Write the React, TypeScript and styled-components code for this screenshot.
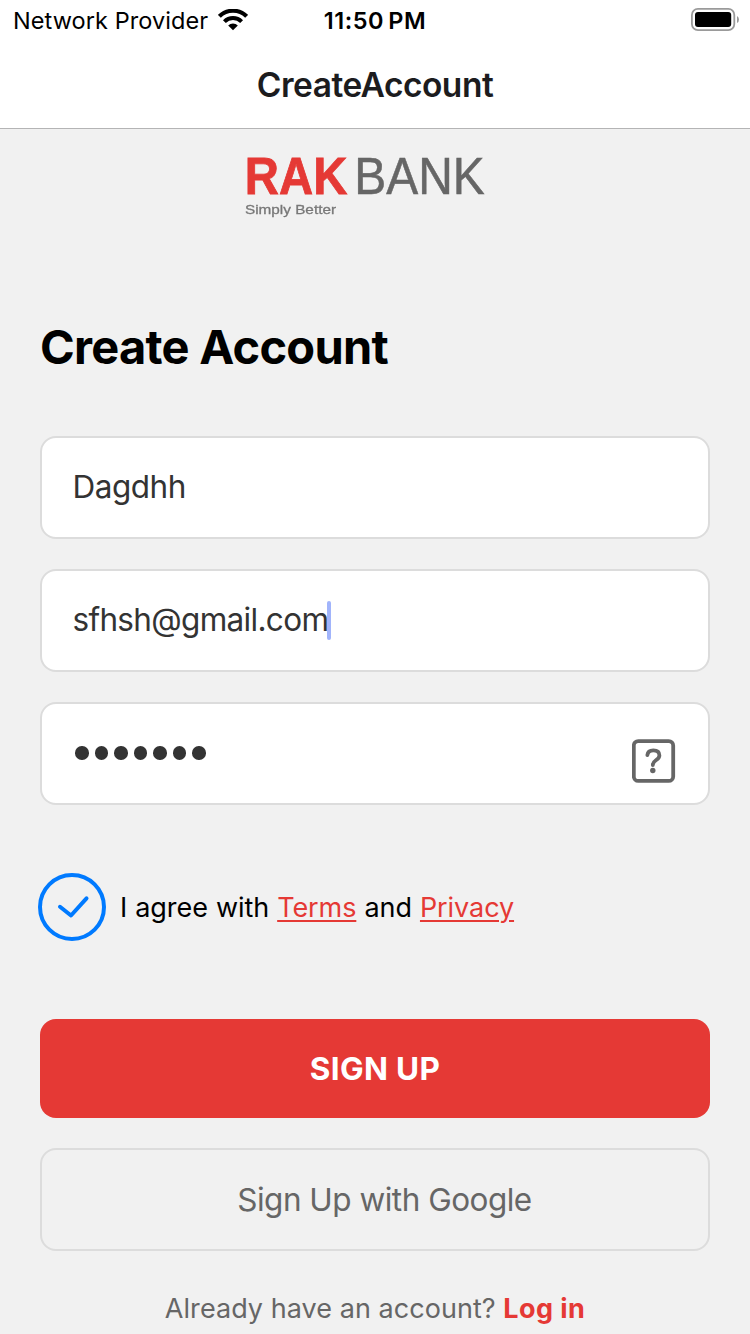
import React from "react";
import styled, { createGlobalStyle } from "styled-components";

const GlobalStyle = createGlobalStyle`
  * { box-sizing: border-box; }
  html, body { margin: 0; padding: 0; background: #f1f1f1; }
  body { font-family: Inter, "Liberation Sans", sans-serif; overflow: hidden; }
`;

const Screen = styled.div`
  width: 750px;
  height: 1334px;
  overflow: hidden;
  display: flex;
  flex-direction: column;
  background: #f1f1f1;
`;

const Header = styled.header`
  height: 129px;
  flex: none;
  background: #fff;
  border-bottom: 1px solid #b4b4b5;
`;

const StatusBar = styled.div`
  height: 40px;
  display: grid;
  grid-template-columns: 1fr auto 1fr;
  align-items: center;
  padding: 0 11px 0 13px;
  color: #000;
  line-height: 38px;
`;

const Carrier = styled.div`
  display: flex;
  align-items: center;
  gap: 9.5px;
  font-size: 23.5px;
  letter-spacing: 0.08px;
`;

const StatusText = styled.span`
  padding-top: 2px;
`;

const Clock = styled.time`
  padding: 2px 2px 0 0;
  font-size: 23.5px;
  font-weight: 600;
  letter-spacing: 0.5px;
  word-spacing: -2px;
  white-space: nowrap;
`;

const BatterySlot = styled.div`
  display: flex;
  justify-content: flex-end;
  padding-bottom: 1px;
`;

const NavTitle = styled.div`
  height: 88px;
  line-height: 90px;
  text-align: center;
  font-size: 33.5px;
  font-weight: 600;
  color: #1c1c1e;
  letter-spacing: -0.5px;
`;

const Content = styled.main`
  flex: 1;
  display: flex;
  flex-direction: column;
  padding: 0 40px;
`;

const Logo = styled.svg`
  display: block;
  margin: 15px 0 0 195px;
  filter: blur(0.6px);
  font-family: "Liberation Sans", Arial, sans-serif;
`;

const Heading = styled.h1`
  margin: 87px 0 0;
  height: 60px;
  line-height: 60px;
  font-size: 47px;
  font-weight: 700;
  color: #000;
  letter-spacing: -0.74px;
  white-space: nowrap;
`;

const Fields = styled.div`
  display: flex;
  flex-direction: column;
  gap: 30px;
  margin-top: 59px;
`;

const Field = styled.div`
  height: 103px;
  display: flex;
  align-items: center;
  padding: 0 32px 1px 30.5px;
  border: 2px solid #dcdcdc;
  border-radius: 16px;
  background: #fff;
  color: #333;
  font-size: 31.5px;
`;

const Value = styled.span<{ $spacing?: number }>`
  margin-bottom: 2px;
  letter-spacing: ${(p) => p.$spacing ?? 0}px;
`;

const Caret = styled.span`
  width: 4px;
  height: 39px;
  margin-left: -1px;
  border-radius: 2px;
  background: #a1b4fb;
`;

const Mask = styled.div`
  flex: 1;
  display: flex;
  gap: 6px;
  padding: 0 0 0 2.5px;
`;

const Dot = styled.span`
  width: 13.5px;
  height: 13.5px;
  border-radius: 50%;
  background: #333;
`;

const HelpIcon = styled.svg`
  margin-top: 16px;
`;

const Agreement = styled.div`
  display: flex;
  align-items: center;
  height: 68px;
  margin: 68px 0 0 -2px;
`;

const AgreementText = styled.span`
  margin-left: 14px;
  font-size: 27px;
  letter-spacing: -0.08px;
  word-spacing: 0.6px;
  color: #000;
  white-space: nowrap;
`;

const TextLink = styled.a`
  color: #e53935;
  text-decoration: underline;
  text-decoration-thickness: 2px;
  text-underline-offset: 3px;
`;

const Button = styled.button<{ $primary?: boolean }>`
  flex: none;
  width: 100%;
  height: ${(p) => (p.$primary ? 99 : 103)}px;
  padding: ${(p) => (p.$primary ? "0 0 1px" : "0 0 1px 19px")};
  border: ${(p) => (p.$primary ? "none" : "2px solid #dcdcdc")};
  border-radius: 16px;
  background: ${(p) => (p.$primary ? "#e53935" : "transparent")};
  color: ${(p) => (p.$primary ? "#fff" : "#666")};
  font-family: inherit;
  font-size: 31.5px;
  font-weight: ${(p) => (p.$primary ? 700 : 400)};
  letter-spacing: ${(p) => (p.$primary ? 0.35 : -0.5)}px;
`;

const Actions = styled.div`
  display: flex;
  flex-direction: column;
  gap: 30px;
  margin-top: 78px;
`;

const Footer = styled.p`
  margin: 38px 0 0;
  height: 40px;
  line-height: 40px;
  text-align: center;
  font-size: 27px;
  letter-spacing: 0.05px;
  color: #666;
  white-space: nowrap;
`;

const LoginLink = styled.a`
  color: #e53935;
  font-weight: 700;
  letter-spacing: 0.4px;
`;

const WifiIcon = () => (
  <svg width="30" height="22" viewBox="0 0 30 22" fill="none" stroke="#000" strokeWidth="4">
    <path d="M1.4 8.1 A19.2 19.2 0 0 1 28.6 8.1" transform="translate(0 -0.8)" />
    <path d="M6.4 13 A12.2 12.2 0 0 1 23.6 13" transform="translate(0 -0.4)" />
    <path d="M15 21.2 L10.2 16.4 A6.8 6.8 0 0 1 19.8 16.4 Z" fill="#000" stroke="none" />
  </svg>
);

const BatteryIcon = () => (
  <svg width="48" height="23" viewBox="0 0 48 23">
    <rect x="0.9" y="0.9" width="42.4" height="21.2" rx="6" fill="none" stroke="#9a9a9a" strokeWidth="1.8" />
    <rect x="4" y="4" width="36.2" height="15" rx="3" fill="#000" />
    <path d="M46 8 Q48 9 48 11.5 Q48 14 46 15 Z" fill="#9a9a9a" />
  </svg>
);

export default function App() {
  return (
    <>
      <GlobalStyle />
      <Screen>
        <Header>
          <StatusBar>
            <Carrier>
              <StatusText>Network Provider</StatusText>
              <WifiIcon />
            </Carrier>
            <Clock>11:50 PM</Clock>
            <BatterySlot>
              <BatteryIcon />
            </BatterySlot>
          </StatusBar>
          <NavTitle>CreateAccount</NavTitle>
        </Header>
        <Content>
          <Logo width="270" height="86" viewBox="0 -6 270 86">
            <text x="9.8" y="43.7" fontSize="51" fontWeight="700" fill="#e53935" stroke="#e53935" strokeWidth="0.8" textLength="102.5" lengthAdjust="spacingAndGlyphs">RAK</text>
            <text x="119.3" y="43.7" fontSize="51" fill="#666" stroke="#666" strokeWidth="0.5" textLength="130.5" lengthAdjust="spacingAndGlyphs">BANK</text>
            <text x="10" y="64" fontSize="13.5" fill="#777" stroke="#777" strokeWidth="0.3" textLength="91" lengthAdjust="spacingAndGlyphs">Simply Better</text>
          </Logo>
          <Heading>Create Account</Heading>
          <Fields>
            <Field>
              <Value $spacing={-0.5}>Dagdhh</Value>
            </Field>
            <Field>
              <Value $spacing={-0.68}>sfhsh@gmail.com</Value>
              <Caret />
            </Field>
            <Field>
              <Mask role="img" aria-label="Password">
                {Array.from({ length: 7 }, (_, i) => (
                  <Dot key={i} />
                ))}
              </Mask>
              <HelpIcon width="44" height="44" viewBox="0 0 44 44" fill="none" stroke="#666" strokeWidth="3.8">
                <rect x="1.8" y="2.1" width="39.4" height="39.8" rx="4.5" />
                <path d="M15.4 16 C15.8 12.6 18.4 11.3 21.3 11.3 C25 11.3 27.4 13 27.4 16.4 C27.4 21 20.8 21 20.8 26" strokeLinecap="round" strokeWidth="3.8" />
                <circle cx="20.8" cy="31.5" r="2.7" fill="#666" stroke="none" />
              </HelpIcon>
            </Field>
          </Fields>
          <Agreement>
            <svg width="68" height="68" viewBox="0 0 68 68" fill="none" stroke="#007aff" strokeWidth="4">
              <circle cx="34" cy="34" r="32" />
              <path d="M22 33.8 L33 42.5 L48.5 25.3" strokeLinecap="round" strokeLinejoin="round" />
            </svg>
            <AgreementText>
              I agree with <TextLink>Terms</TextLink> and <TextLink>Privacy</TextLink>
            </AgreementText>
          </Agreement>
          <Actions>
            <Button $primary>SIGN UP</Button>
            <Button>Sign Up with Google</Button>
          </Actions>
          <Footer>
            Already have an account? <LoginLink>Log in</LoginLink>
          </Footer>
        </Content>
      </Screen>
    </>
  );
}
